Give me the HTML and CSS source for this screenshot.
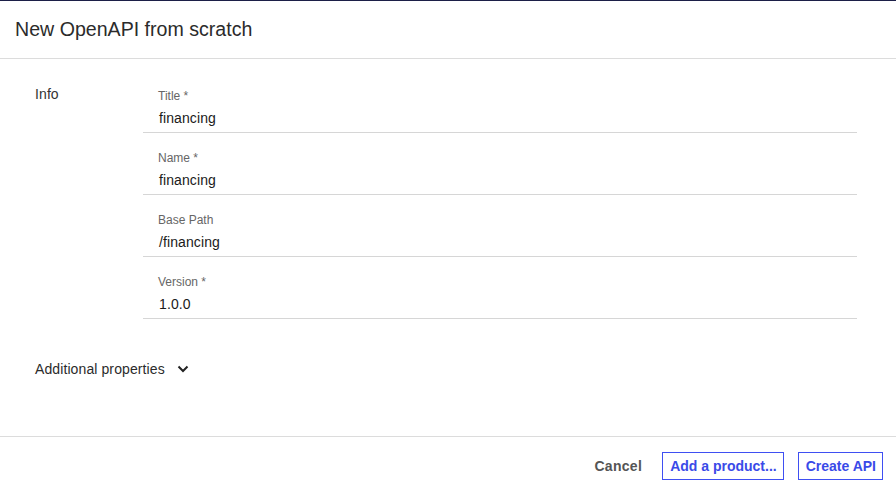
FILE: index.html
```html
<!DOCTYPE html>
<html>
<head>
<meta charset="utf-8">
<link rel="stylesheet" href="styles.css">
</head>
<body>
<div class="dialog">
  <header class="head">
    <h1 class="head-title">New OpenAPI from scratch</h1>
  </header>
  <main class="body">
    <section class="info-row">
      <div class="section-label">Info</div>
      <div class="fields">
        <div class="field">
          <div class="field-label">Title *</div>
          <div class="field-value">financing</div>
        </div>
        <div class="field">
          <div class="field-label">Name *</div>
          <div class="field-value">financing</div>
        </div>
        <div class="field">
          <div class="field-label">Base Path</div>
          <div class="field-value">/financing</div>
        </div>
        <div class="field">
          <div class="field-label">Version *</div>
          <div class="field-value">1.0.0</div>
        </div>
      </div>
    </section>
    <div class="additional">
      <span>Additional properties</span>
      <svg class="chev" width="12" height="8" viewBox="0 0 12 8"><path d="M1.5 1.5 L6 6 L10.5 1.5" fill="none" stroke="#222" stroke-width="2"/></svg>
    </div>
  </main>
  <footer class="foot">
    <button class="btn-text">Cancel</button>
    <button class="btn-outline">Add a product...</button>
    <button class="btn-outline">Create API</button>
  </footer>
</div>
</body>
</html>
```
FILE: styles.css
```css
html, body {
  margin: 0;
  padding: 0;
  background: #fff;
}
body {
  font-family: "Liberation Sans", Arial, sans-serif;
  color: #333;
}
.dialog {
  width: 896px;
  height: 495px;
  border-top: 1px solid #1c1f48;
  box-sizing: border-box;
  display: flex;
  flex-direction: column;
}
.head {
  height: 57px;
  border-bottom: 1px solid #dcdcdc;
  display: flex;
  align-items: center;
  padding: 0 15px;
}
.head-title {
  margin: 0;
  font-size: 19.6px;
  font-weight: normal;
  color: #2b2b2b;
}
.body {
  flex: 1;
  padding: 25px 0 0 35px;
  border-bottom: 1px solid #dcdcdc;
}
.info-row {
  display: flex;
}
.section-label {
  width: 108px;
  font-size: 14px;
  line-height: 20px;
  color: #333;
  letter-spacing: 0.1px;
}
.fields {
  width: 714px;
  padding-top: 5px;
}
.field {
  border-bottom: 1px solid #d6d6d6;
  padding: 0 15px 4px;
  margin-bottom: 18px;
}
.field:last-child {
  margin-bottom: 0;
}
.field-label {
  font-size: 12px;
  line-height: 14px;
  color: #666;
  margin-bottom: 5px;
}
.field-value {
  font-size: 14px;
  line-height: 20px;
  color: #1a1a1a;
  padding-left: 1px;
  letter-spacing: 0.1px;
}
.additional {
  margin-top: 40px;
  display: flex;
  align-items: center;
  gap: 12px;
  font-size: 14px;
  line-height: 20px;
  color: #2b2b2b;
  letter-spacing: 0.1px;
}
.chev {
  display: block;
}
.foot {
  height: 58px;
  display: flex;
  align-items: flex-start;
  justify-content: flex-end;
  padding: 15px 13px 0 0;
  box-sizing: border-box;
  gap: 14px;
}
.foot button {
  font-family: "Liberation Sans", Arial, sans-serif;
  font-size: 14px;
  font-weight: bold;
  height: 28px;
  background: #fff;
  cursor: pointer;
}
.btn-text {
  border: none;
  color: #555;
  padding: 0;
  margin-right: 6px;
  letter-spacing: 0.3px;
}
.btn-outline {
  border: 1px solid #3f4ff2;
  color: #3a4ae8;
  padding: 0 6px 0 7px;
}
```
